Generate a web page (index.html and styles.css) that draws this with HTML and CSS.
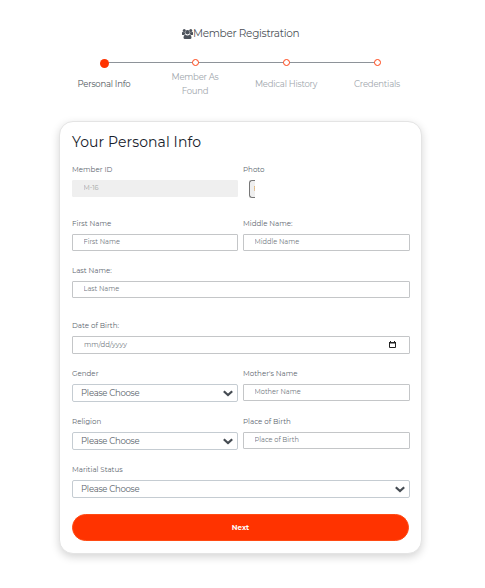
FILE: index.html
```html
<!DOCTYPE html>
<html lang="en">
<head>
<meta charset="utf-8">
<title>Member Registration</title>
<link rel="stylesheet" href="styles.css">
</head>
<body>
<header class="heading">
  <svg class="users" viewBox="0 0 22 20" aria-hidden="true"><circle cx="4.5" cy="3" r="3"/><circle cx="17.5" cy="3" r="3"/><circle cx="11" cy="6.500" r="4.300"/><path d="M0 11V8q0-2.500 2-2.500 2 1.500 4 1 0 2.500 1.500 4Q5 10.500 4 12H2q-2 0-2-1zM22 11V8q0-2.500-2-2.500-2 1.500-4 1 0 2.500-1.500 4 2.500 0 3.500 1.500h2q2 0 2-1zM3 17q0-5.500 3.500-5.500 4.500 3 9 0 3.500 0 3.500 5.500 0 3-3 3H6q-3 0-3-3z"/></svg>
  <span class="heading-text">Member Registration</span>
</header>
<ol class="steps">
  <li class="step active"><i class="dot"></i><span class="step-label">Personal Info</span></li>
  <li class="step"><i class="dot"></i><span class="step-label">Member As<br>Found</span></li>
  <li class="step"><i class="dot"></i><span class="step-label">Medical History</span></li>
  <li class="step"><i class="dot"></i><span class="step-label">Credentials</span></li>
</ol>
<form class="card">
  <h1 class="title">Your Personal Info</h1>
  <div class="fields">
    <div class="field"><label>Member ID</label><input class="control disabled" value="M-16" disabled></div>
    <div class="field"><label>Photo</label><div class="file"><span>F</span></div></div>
    <div class="field"><label>First Name</label><input class="control" placeholder="First Name"></div>
    <div class="field"><label>Middle Name:</label><input class="control" placeholder="Middle Name"></div>
    <div class="field wide"><label>Last Name:</label><input class="control" placeholder="Last Name"></div>
    <div class="field wide"><label>Date of Birth:</label>
      <div class="control date"><span>mm/dd/yyyy</span><svg class="calendar" viewBox="0 0 7 7"><path d="M.5 1.500h6v5h-6z" fill="none" stroke="#222"/><path d="M0 1h7v1.500H0zM1 0h1v1H1zM5 0h1v1H5z" fill="#222"/></svg></div></div>
    <div class="field"><label>Gender</label><div class="control select"><span>Please Choose</span><svg class="chevron" viewBox="0 0 10 7"><path d="M.8 1.200l4.200 3.900 4.200-3.900"/></svg></div></div>
    <div class="field"><label>Mother's Name</label><input class="control" placeholder="Mother Name"></div>
    <div class="field"><label>Religion</label><div class="control select"><span>Please Choose</span><svg class="chevron" viewBox="0 0 10 7"><path d="M.8 1.200l4.200 3.900 4.200-3.900"/></svg></div></div>
    <div class="field"><label>Place of Birth</label><input class="control" placeholder="Place of Birth"></div>
    <div class="field wide"><label>Maritial Status</label><div class="control select"><span>Please Choose</span><svg class="chevron" viewBox="0 0 10 7"><path d="M.8 1.200l4.200 3.900 4.200-3.900"/></svg></div></div>
  </div>
  <button class="next" type="button">Next</button>
</form>
</body>
</html>
```
FILE: styles.css
```css
* { box-sizing: border-box; }
body { margin: 0; height: 588px; overflow: hidden; background: #fff; color: #6c757d; font-family: Montserrat, Inter, "Liberation Sans", sans-serif; }
.heading { display: flex; align-items: center; height: 14px; margin: 27px 0 0 182px; color: #4c5157; }
.users { width: 11px; height: 10px; fill: #4c525b; }
.heading-text { font-size: 10.500px; letter-spacing: -.3px; line-height: 14px; white-space: nowrap; }
.steps { display: grid; grid-template-columns: repeat(4, 91px); margin: 17px 0 0 58.500px; padding: 0; height: 63px; list-style: none; }
.step { position: relative; display: flex; flex-direction: column; align-items: center; color: #a0a6ac; font-size: 8.500px; letter-spacing: -.22px; line-height: 14px; text-align: center; }
.step:not(:last-child)::after { content: ""; position: absolute; top: 4px; left: 50%; width: 91px; height: 1px; background: #8e9399; }
.dot { z-index: 1; width: 7px; height: 7px; margin: 1px 0 4px; border: 1.500px solid #ff4314; border-radius: 50%; background: #fff; }
.step-label { display: flex; flex-direction: column; justify-content: center; height: 28px; white-space: nowrap; }
.active { color: #4f565d; }
.active .dot { width: 9px; height: 9px; margin: 1px 0 2px; border: 0; background: #ff3300; }
.card { width: 363px; height: 433px; margin: 0 0 0 59px; padding: 11px 12px 12px; border: 1px solid #e4e4e4; border-radius: 14px; background: #fff; box-shadow: 0 3px 8px rgba(0,0,0,.17); }
.title { margin: 0 0 12px; height: 18px; color: #17212b; font-size: 14px; line-height: 18px; font-weight: 400; letter-spacing: .1px; }
.fields { display: grid; grid-template-columns: 166px 167px; grid-template-rows: 54px 47px 55px 48px 48px 48px; column-gap: 5px; height: 351px; align-content: start; }
.wide { grid-column: 1 / -1; }
label { display: block; height: 14px; margin-bottom: 3px; color: #5d666f; font-size: 7.100px; line-height: 14px; }
.control { display: block; width: 100%; height: 17px; padding: 0 10px 2px 10.500px; border: 1px solid #c4c6c8; border-radius: 1px; background: #fff; color: #70777e; font: inherit; font-size: 6.600px; }
.control::placeholder { color: #70777e; opacity: 1; }
.control.disabled { border-color: #efefef; background: #efefef; color: #a4a4a4; }
.file { width: 6px; height: 18px; margin: 3px 0 0 6px; padding-left: 4px; overflow: hidden; border: 1px solid #777; border-right: 0; border-radius: 3px 0 0 3px; background: #efefef; color: #222; font-size: 6.800px; line-height: 15px; }
.date, .select { display: flex; align-items: center; justify-content: space-between; height: 18px; }
.date { padding: 0 13px 1px 11px; font-size: 6.900px; }
.calendar { width: 7px; height: 7px; }
.select { padding: 0 4px 0 8px; border-color: #c5ccd2; border-radius: 2px; color: #596169; font-size: 8.500px; letter-spacing: -.25px; }
.chevron { width: 10px; height: 7px; fill: none; stroke: #464c53; stroke-width: 2.200; }
.next { display: block; width: 337px; height: 27px; padding: 0; border: 1px solid #ff4a13; border-radius: 14px; background: #ff3300; color: #fff; font-family: inherit; font-size: 7.100px; font-weight: 700; }
```
